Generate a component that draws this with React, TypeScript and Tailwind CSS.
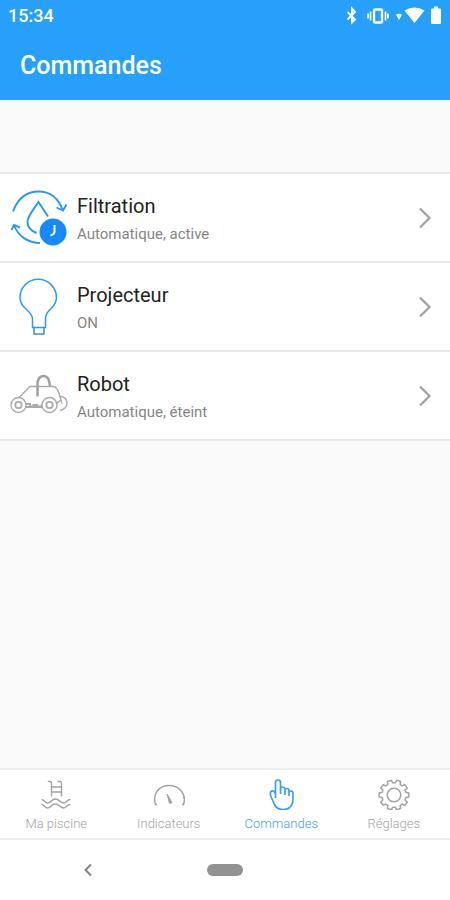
import type { ReactNode } from "react";

function StatusBar() {
  return (
    <div className="flex h-8 items-center justify-between pl-2 pr-1 text-white">
      <span className="text-lg leading-8 font-medium">15:34</span>
      <svg className="h-8 w-26" viewBox="0 0 104 32" fill="none" stroke="currentColor" aria-hidden="true">
        <path d="M5.500 12 13 19.500 10 22.500V8.500L13 12 5.500 19.500" strokeWidth="1.900" />
        <rect x="32" y="9.500" width="8" height="13" rx="1" strokeWidth="2.400" />
        <path d="M28.500 11.500v9M43.500 11.500v9M26 13.500v5M46 13.500v5" strokeWidth="1.700" />
        <path d="M54 14.500q3-1.500 6 0l-3 5.500z" fill="currentColor" stroke="none" />
        <path d="M62.500 10.500q10-6 20 0l-10 12.500z" fill="currentColor" stroke="none" />
        <path d="M90 8.500h2v-2h4v2h2q1 0 1 1V23q0 1-1 1h-8q-1 0-1-1V9.500q0-1 1-1z" fill="currentColor" stroke="none" />
      </svg>
    </div>
  );
}

function FiltrationIcon() {
  return (
    <svg className="h-15 w-15" viewBox="0 0 60 60" fill="none" stroke="#249af5" strokeWidth="1.900" aria-hidden="true">
      <path d="M3 23.500C8 10 17 3.500 28.500 3.500s20 7 24 18" />
      <path d="m46.500 19.500 6.500 3 3.500-6" />
      <path d="M30 55C18 55 8 48 4 37" />
      <path d="M1.500 42 4 37l6 2.500" />
      <path d="M38 28.500 28.500 14C24 21 17.500 28 17.500 34c0 5 4 9 9 11" />
      <circle cx="43" cy="44" r="13.500" fill="#168afa" stroke="none" />
      <path d="M44.500 37v7q0 2-4 3.500" stroke="#fff" strokeWidth="2" />
    </svg>
  );
}

function BulbIcon() {
  return (
    <svg className="h-15 w-15" viewBox="0 0 60 60" fill="none" stroke="#269df7" strokeWidth="1.500" aria-hidden="true">
      <path d="M22.500 50.500V42c0-5-4-7.500-8-11.500C11.500 27.500 10 24 10 20.500a18.200 18.200 0 0 1 36.400 0c0 4-1.500 7-4.400 10-4 4-6.500 6.500-6.500 11.500v8.500z" />
      <path d="M24 50.500V57h10v-6.500" stroke="#3b88f0" />
    </svg>
  );
}

function RobotIcon() {
  return (
    <svg className="h-15 w-15" viewBox="0 0 60 60" fill="none" stroke="#aaa" strokeWidth="1.400" aria-hidden="true">
      <path d="M9 31.500 20 20.500h23q4 0 6 7l3 10" />
      <path d="M27.500 30.500V19c0-6 2-9 6-9s6 3 6.500 10.500" stroke="#a0a0a0" strokeWidth="2.500" />
      <path d="M49 30q8 1 8 7t-7 7.500" />
      <path d="M16 38h4v2.500h3.500V39H27v1.500h5V38M16 41h16" strokeWidth="2.200" />
      <circle cx="8.500" cy="39" r="7.500" fill="#fff" />
      <circle cx="8.500" cy="39" r="3.200" strokeWidth="1.800" />
      <circle cx="39.500" cy="39" r="7.500" fill="#fff" />
      <circle cx="39.500" cy="39" r="3.200" strokeWidth="1.800" />
      <path d="m46 38 5-4" />
    </svg>
  );
}

function PoolIcon() {
  return (
    <svg className="size-8" viewBox="0 0 32 32" fill="none" stroke="currentColor" strokeWidth="1.400" aria-hidden="true">
      <path d="M8.500 4V3.500h1q2 0 2 2V18.500M17.500 3.500H20q1.500 0 1.500 2V18.500M11.500 9h10M11.500 14h10" />
      <path d="M1.500 21.500c3 0 3 3.500 6 3.500s4.500-4 8-4 5 4 8 4 3-3.500 7-3.500M1.500 26.500c3 0 3 3.500 6 3.500s4.500-4 8-4 5 4 8 4 3-3.500 7-3.500" />
    </svg>
  );
}

function GaugeIcon() {
  return (
    <svg className="size-8" viewBox="0 0 32 32" fill="none" stroke="currentColor" strokeWidth="1.500" aria-hidden="true">
      <path d="M4 26.500H2.500C-1 16 6 7.500 16 7.500s18 8.500 14.500 19H29" />
      <path d="m14 16 5 8.500-2.500 1z" fill="currentColor" strokeWidth="1" />
    </svg>
  );
}

function HandIcon() {
  return (
    <svg className="size-8" viewBox="0 0 32 32" fill="none" stroke="currentColor" strokeWidth="1.700" strokeLinejoin="round" aria-hidden="true">
      <path d="M10.500 20V4.500q0-2.500 2.500-2.500t2.500 2.500V16M15.500 11q0-2 2-2t2.500 2v6M20 12q.500-1.500 2-1.500 2 0 2 2V18M24 14q.500-1 2-1 2 0 2 2.500v5.500q0 10.500-10 10.500-6 0-8.500-5L6 18.500q-1.500-4 .500-5.500 2.500-1 4 3" />
    </svg>
  );
}

const gearOutline = Array.from({ length: 10 }, (_, tooth) =>
  [
    [-12, 12.2],
    [-8, 15],
    [8, 15],
    [12, 12.2],
  ]
    .map(([offset, radius]) => {
      const angle = ((tooth * 36 + offset) * Math.PI) / 180;
      return `${16 + radius * Math.cos(angle)},${17 + radius * Math.sin(angle)}`;
    })
    .join(" "),
).join(" ");

function GearIcon() {
  return (
    <svg className="size-8" viewBox="0 0 32 32" fill="none" stroke="currentColor" strokeWidth="1.500" strokeLinejoin="round" aria-hidden="true">
      <polygon points={gearOutline} />
      <circle cx="16" cy="17" r="6.800" />
    </svg>
  );
}

const devices: { name: string; state: string; icon: ReactNode }[] = [
  { name: "Filtration", state: "Automatique, active", icon: <FiltrationIcon /> },
  { name: "Projecteur", state: "ON", icon: <BulbIcon /> },
  { name: "Robot", state: "Automatique, éteint", icon: <RobotIcon /> },
];

const tabs: { label: string; icon: ReactNode; active?: boolean }[] = [
  { label: "Ma piscine", icon: <PoolIcon /> },
  { label: "Indicateurs", icon: <GaugeIcon /> },
  { label: "Commandes", icon: <HandIcon />, active: true },
  { label: "Réglages", icon: <GearIcon /> },
];

export default function App() {
  return (
    <div className="flex min-h-screen flex-col bg-[#fafafa] font-['Roboto',sans-serif]">
      <header className="bg-[#27a0fb] pb-2.5">
        <StatusBar />
        <h1 className="px-5 pt-2.5 text-[25px] leading-12 font-medium text-white">Commandes</h1>
      </header>

      <main className="flex-1 pt-18">
        <ul className="border-t-2 border-[#e8e8e8] bg-white">
          {devices.map((device) => (
            <li key={device.name}>
              <button type="button" className="flex h-[89px] w-full items-center border-b-2 border-[#e8e8e8] pr-4 pl-2.5 text-left">
                {device.icon}
                <span className="ml-[7px] flex flex-1 flex-col gap-1">
                  <span className="text-xl leading-7 text-[#222]">{device.name}</span>
                  <span className="text-[15px] leading-5 text-[#858585]">{device.state}</span>
                </span>
                <svg className="h-6 w-4" viewBox="0 0 16 24" fill="none" stroke="#a0a0a0" strokeWidth="2.200" aria-hidden="true">
                  <path d="m2 2.500 9.500 9.500L2 21.500" />
                </svg>
              </button>
            </li>
          ))}
        </ul>
      </main>

      <nav className="grid h-18 grid-cols-4 border-y-2 border-[#ececec] bg-white">
        {tabs.map((tab) => (
          <button
            key={tab.label}
            type="button"
            aria-current={tab.active ? "page" : undefined}
            className={`flex flex-col items-center gap-1 pt-2 ${tab.active ? "text-[#3c9efc]" : "text-[#a3a3a3]"}`}
          >
            {tab.icon}
            <span className="text-[13px] leading-5 font-light">{tab.label}</span>
          </button>
        ))}
      </nav>

      <div className="grid h-15 grid-cols-[1fr_auto_1fr] items-center bg-white">
        <div className="flex justify-center pr-8">
          <button type="button" aria-label="Retour" className="p-2 text-[#858585]">
            <svg className="h-4 w-3" viewBox="0 0 12 16" fill="none" stroke="currentColor" strokeWidth="2">
              <path d="M9 2.500 3.500 8 9 13.500" />
            </svg>
          </button>
        </div>
        <button type="button" aria-label="Accueil" className="h-3 w-9 rounded-full bg-[#929292]" />
      </div>
    </div>
  );
}
